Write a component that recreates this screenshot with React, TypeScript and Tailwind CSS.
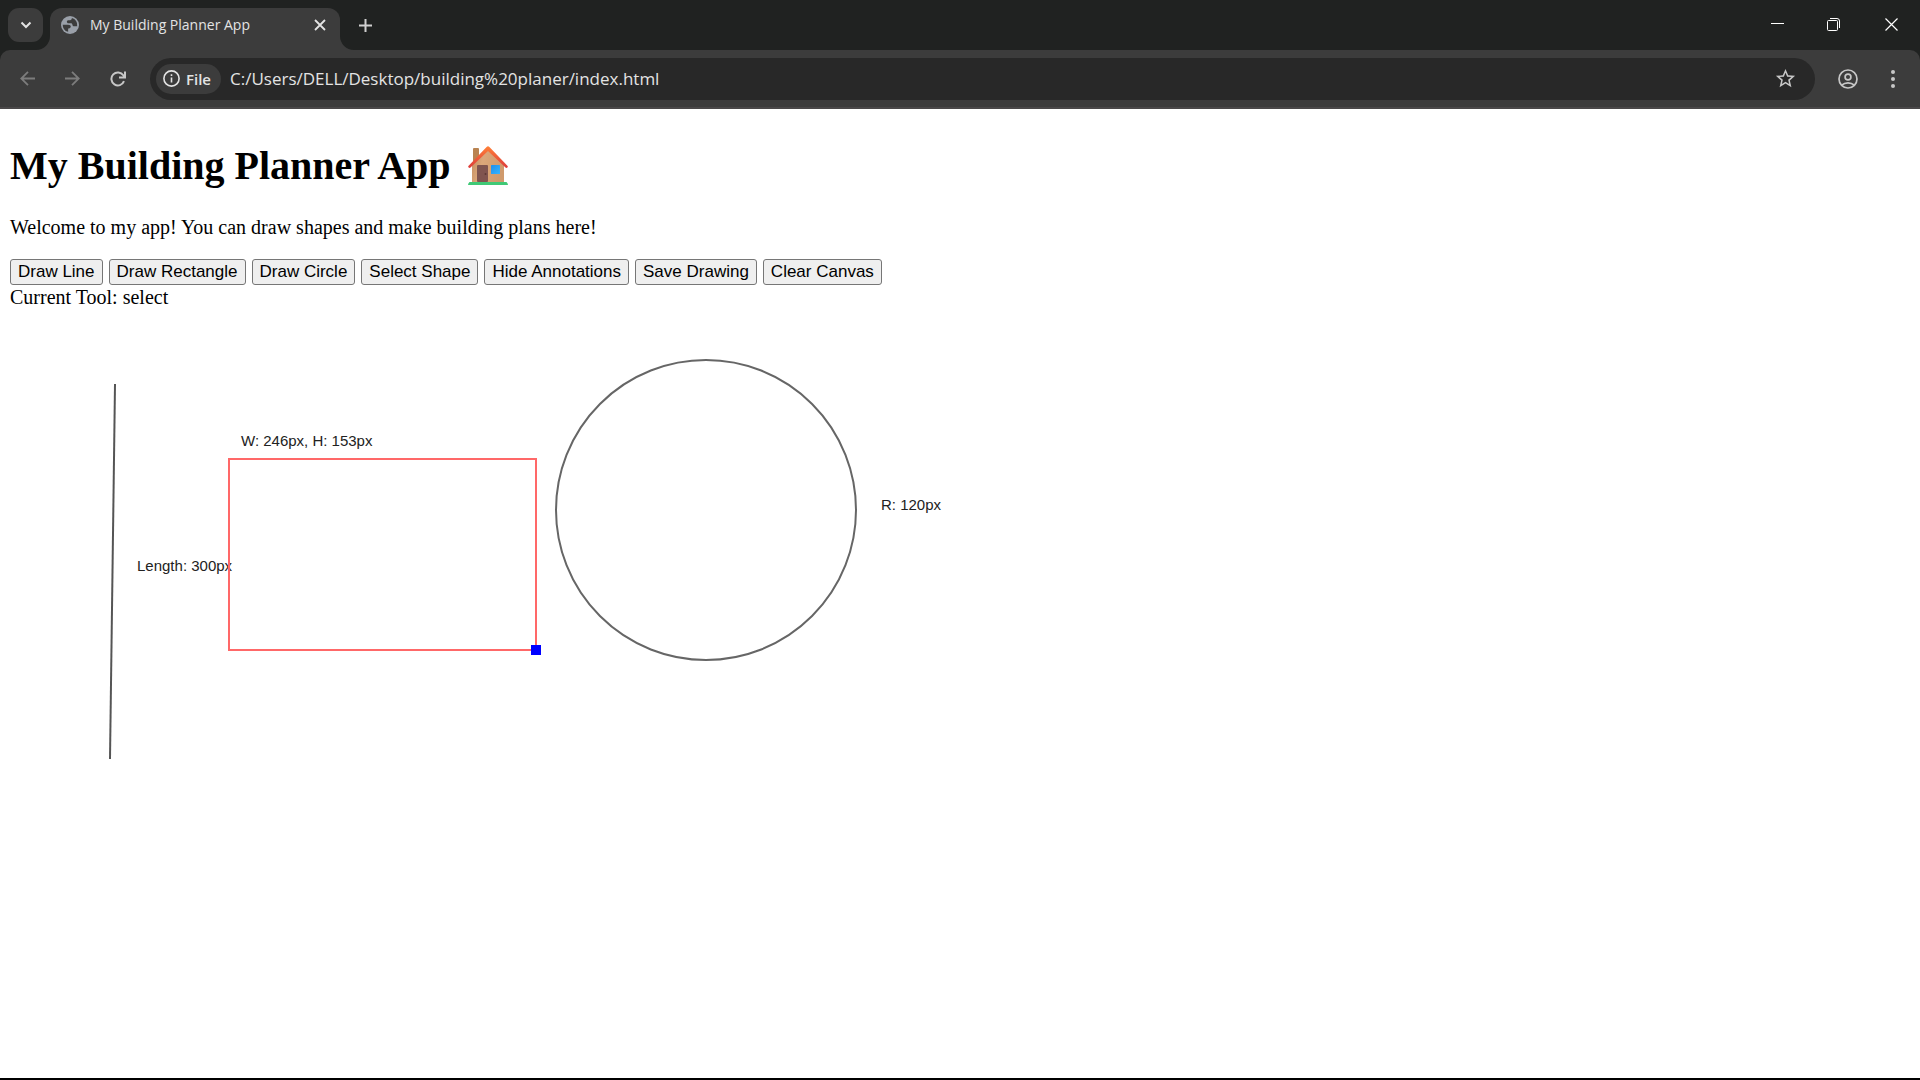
import { useState } from "react";

const ui = "font-['Open_Sans','Noto_Sans',sans-serif]";

function Globe() {
  return (
    <svg viewBox="0 0 24 24" className="size-[18px] shrink-0" aria-hidden="true">
      <circle cx="12" cy="12" r="12" fill="#9aa0a9" />
      <path
        d="M2.300 11.500h7.200c2.500 0 3.500 1 3.500 2.500s-1 2.500-2.500 2.500H9.500V21A9.700 9.700 0 0 1 2.300 11.500z"
        fill="#3c3c3c"
      />
      <path
        d="M14.500 2.600A9.700 9.700 0 0 1 21.600 13.500h-3.800c-1.800 0-2.600-.8-2.600-2s-.7-2-2.200-2H10c-1.300 0-2.200-.9-2.200-2s.9-2 2.200-2h2c1.500 0 2.500-1.200 2.500-2.900z"
        fill="#3c3c3c"
      />
    </svg>
  );
}

function House() {
  return (
    <svg viewBox="0 0 40 40" className="h-10 w-10 shrink-0" role="img" aria-label="house">
      <defs>
        <linearGradient id="wall" x1="0" x2="1" y1="0" y2="0.3">
          <stop offset="0" stopColor="#c08a5c" />
          <stop offset="0.4" stopColor="#dca77a" />
          <stop offset="1" stopColor="#d09a6c" />
        </linearGradient>
        <linearGradient id="roof" x1="0" x2="0" y1="0" y2="1">
          <stop offset="0" stopColor="#ff8038" />
          <stop offset="1" stopColor="#dd3b3b" />
        </linearGradient>
        <linearGradient id="pane" x1="0" x2="1" y1="0" y2="1">
          <stop offset="0" stopColor="#1f8fec" />
          <stop offset="1" stopColor="#35b4ff" />
        </linearGradient>
      </defs>
      <rect x="5" y="2" width="6" height="15" rx="1" fill="#b98351" />
      <path d="M4 19 20 3l16 16v18H4z" fill="url(#wall)" />
      <rect x="9" y="19" width="11" height="17" rx="1" fill="#80544f" />
      <circle cx="17.500" cy="28" r="1" fill="#5e3936" />
      <rect x="23" y="19" width="9" height="9" rx="0.600" fill="url(#pane)" />
      <path d="M2.500 21.500a1.300 1.300 0 0 1-1.900-1.800L18.600 1a2 2 0 0 1 2.800 0l18 18.700a1.300 1.300 0 0 1-1.900 1.800L20 5z" fill="url(#roof)" />
      <path d="M1.500 36h37q1.500 1.500 1.500 3H0q0-1.500 1.500-3z" fill="#3fc976" />
    </svg>
  );
}

function TabStrip() {
  return (
    <div className={`flex h-[50px] items-start bg-[#202221] text-[#e3e3e3] ${ui}`}>
      <button aria-label="Search tabs" className="mt-2 ml-2 flex h-[34px] w-[35px] shrink-0 items-center justify-center rounded-[11px] bg-[#3c3c3c]">
        <svg viewBox="0 0 12 8" className="h-2 w-3" fill="none" stroke="#e3e3e3" strokeWidth="2">
          <path d="m1.500 1.500 4.500 4.500 4.500-4.500" />
        </svg>
      </button>
      <div className="relative mt-2 ml-[7px] flex h-[42px] w-[290px] shrink-0 items-start rounded-t-xl bg-[#3c3c3c] pt-[5px] pr-3 pl-[11px]">
        <svg viewBox="0 0 14 14" className="absolute bottom-0 -left-[14px] size-[14px]" aria-hidden="true">
          <path d="M14 0v14H0A14 14 0 0 0 14 0z" fill="#3c3c3c" />
        </svg>
        <svg viewBox="0 0 14 14" className="absolute -right-[14px] bottom-0 size-[14px]" aria-hidden="true">
          <path d="M0 0v14h14A14 14 0 0 1 0 0z" fill="#3c3c3c" />
        </svg>
        <div className="flex h-6 grow items-center gap-[11px]">
          <Globe />
          <span className="grow text-[14px] leading-6 whitespace-nowrap">My Building Planner App</span>
          <button aria-label="Close tab" className="flex size-4 items-center justify-center">
            <svg viewBox="0 0 12 12" className="size-3" stroke="#e3e3e3" strokeWidth="1.800">
              <path d="m1 1 10 10M11 1 1 11" />
            </svg>
          </button>
        </div>
      </div>
      <button aria-label="New tab" className="mt-[13px] ml-[13px] flex size-6 items-center justify-center">
        <svg viewBox="0 0 13 13" className="size-[13px]" stroke="#d0d0d0" strokeWidth="2">
          <path d="M6.500 0v13M0 6.500h13" />
        </svg>
      </button>
      <div className="ml-auto flex h-[49px] items-center">
        <button aria-label="Minimize" className="flex h-full w-[53px] items-center justify-center">
          <svg viewBox="0 0 13 13" className="size-[13px]" stroke="#fff"><path d="M0 5.500h13" /></svg>
        </button>
        <button aria-label="Restore" className="flex h-full w-[59px] items-center justify-center">
          <svg viewBox="0 0 13 13" className="size-[13px]" fill="none" stroke="#fff">
            <path d="M3 .5h7a2.500 2.500 0 0 1 2.500 2.500v7" />
            <rect x=".5" y="2.500" width="10" height="10" rx="1" />
          </svg>
        </button>
        <button aria-label="Close window" className="flex h-full w-[57px] items-center justify-center">
          <svg viewBox="0 0 13 13" className="size-[13px]" stroke="#fff" strokeWidth="1.200"><path d="m.5.500 12 12M12.500.500l-12 12" /></svg>
        </button>
      </div>
    </div>
  );
}

function Toolbar() {
  const [url, setUrl] = useState("C:/Users/DELL/Desktop/building%20planer/index.html");
  return (
    <div className="bg-[#202221]">
      <div className={`flex h-[59px] items-center rounded-t-[10px] border-b-2 border-[#4a4849] bg-[#3c3c3c] pr-[15px] pl-[15px] text-[#e3e3e3] ${ui}`}>
        <div className="flex items-center gap-5">
          <button aria-label="Back" className="flex size-[25px] items-center justify-center">
            <svg viewBox="0 0 15 15" className="size-[15px]" fill="none" stroke="#7c7c7c" strokeWidth="1.800">
              <path d="M15 7.500H1.500M8 .800 1.300 7.500 8 14.200" />
            </svg>
          </button>
          <button aria-label="Forward" className="flex size-[25px] items-center justify-center">
            <svg viewBox="0 0 15 15" className="size-[15px]" fill="none" stroke="#7c7c7c" strokeWidth="1.800">
              <path d="M0 7.500h13.500M7 .800l6.700 6.700L7 14.200" />
            </svg>
          </button>
          <button aria-label="Reload" className="flex size-[25px] items-center justify-center">
            <svg viewBox="0 0 16 16" className="size-4" fill="none" stroke="#c7c7c7" strokeWidth="2">
              <path d="M14 10.200A6.500 6.500 0 1 1 13.300 4.300L14.500 6M15 .500V6.500H9" />
            </svg>
          </button>
        </div>
        <div className="ml-5 flex h-[42px] min-w-0 grow items-center rounded-full bg-[#282828] pr-5 pl-[6px]">
          <button className="flex h-[30px] shrink-0 items-center gap-[6px] rounded-full bg-[#3c3c3c] pr-[10px] pl-[7px] text-[15px] leading-5 font-semibold">
            <svg viewBox="0 0 17 17" className="size-[17px]" fill="none" stroke="#e3e3e3" strokeWidth="1.600" aria-hidden="true">
              <circle cx="8.500" cy="8.500" r="7.600" />
              <path d="M8.500 7.500v5M8.500 4.300v1.700" />
            </svg>
            File
          </button>
          <input
            aria-label="Address"
            value={url}
            onChange={(e) => setUrl(e.target.value)}
            className="ml-[9px] min-w-0 grow bg-transparent text-[17px] leading-6 outline-none"
          />
          <button aria-label="Bookmark" className="flex size-5 items-center justify-center">
            <svg viewBox="0 0 24 24" className="size-[23px] shrink-0" fill="#c7c7c7">
              <path d="m22 9.240-7.190-.620L12 2 9.190 8.630 2 9.240l5.460 4.730L5.820 21 12 17.270 18.180 21l-1.630-7.030L22 9.240zM12 15.400l-3.760 2.270 1-4.280-3.320-2.880 4.380-.380L12 6.100l1.710 4.040 4.380.380-3.320 2.880 1 4.280L12 15.400z" />
            </svg>
          </button>
        </div>
        <button aria-label="Profile" className="ml-5 flex size-[25px] items-center justify-center">
          <svg viewBox="0 0 20 20" className="size-5" fill="none" stroke="#c7c7c7" strokeWidth="1.700">
            <circle cx="10" cy="10" r="9" />
            <circle cx="10" cy="8" r="2.900" />
            <path d="M3.700 16.200c3.500-3.200 9.100-3.200 12.600 0" />
          </svg>
        </button>
        <button aria-label="Menu" className="ml-5 flex size-[25px] items-center justify-center">
          <svg viewBox="0 0 4 18" className="h-[18px] w-1" fill="#c7c7c7">
            <circle cx="2" cy="2" r="2" />
            <circle cx="2" cy="9" r="2" />
            <circle cx="2" cy="16" r="2" />
          </svg>
        </button>
      </div>
    </div>
  );
}

const tools = ["Draw Line", "Draw Rectangle", "Draw Circle", "Select Shape", "Hide Annotations", "Save Drawing", "Clear Canvas"];

function Drawing() {
  return (
    <svg viewBox="0 0 1000 750" className="h-[750px] w-[1000px] max-w-full font-['Liberation_Sans',sans-serif] text-[15px]" role="img" aria-label="Building plan">
      <g fill="#222">
        <text x="231" y="137">W: 246px, H: 153px</text>
        <text x="127" y="262">Length: 300px</text>
        <text x="871" y="201">R: 120px</text>
      </g>
      <g fill="none" strokeWidth="2">
        <path d="M105 75 100 450" stroke="#555" />
        <circle cx="696" cy="201" r="150" stroke="#666" />
        <rect x="219" y="150" width="307" height="191" stroke="#ff6868" />
      </g>
      <rect x="521" y="336" width="10" height="10" fill="#00f" />
    </svg>
  );
}

export default function App() {
  return (
    <div className="flex min-h-screen flex-col bg-white">
      <TabStrip />
      <Toolbar />
      <main className="grow px-[10px] pt-[34px] font-['Liberation_Serif',serif] text-xl leading-6 text-black">
        <h1 className="flex items-center gap-[17px] text-[40px] leading-[46px] font-bold">
          My Building Planner App
          <House />
        </h1>
        <p className="mt-[26px]">Welcome to my app! You can draw shapes and make building plans here!</p>
        <div className="mt-5 flex flex-wrap gap-[6px] font-['Liberation_Sans',sans-serif]">
          {tools.map((t) => (
            <button key={t} className="h-[26px] rounded-[3px] border border-[#767676] bg-[#efefef] px-[7px] text-[17px] leading-5">
              {t}
            </button>
          ))}
        </div>
        <p>Current Tool: select</p>
        <Drawing />
      </main>
      <div className="h-[2px] bg-black" />
    </div>
  );
}
